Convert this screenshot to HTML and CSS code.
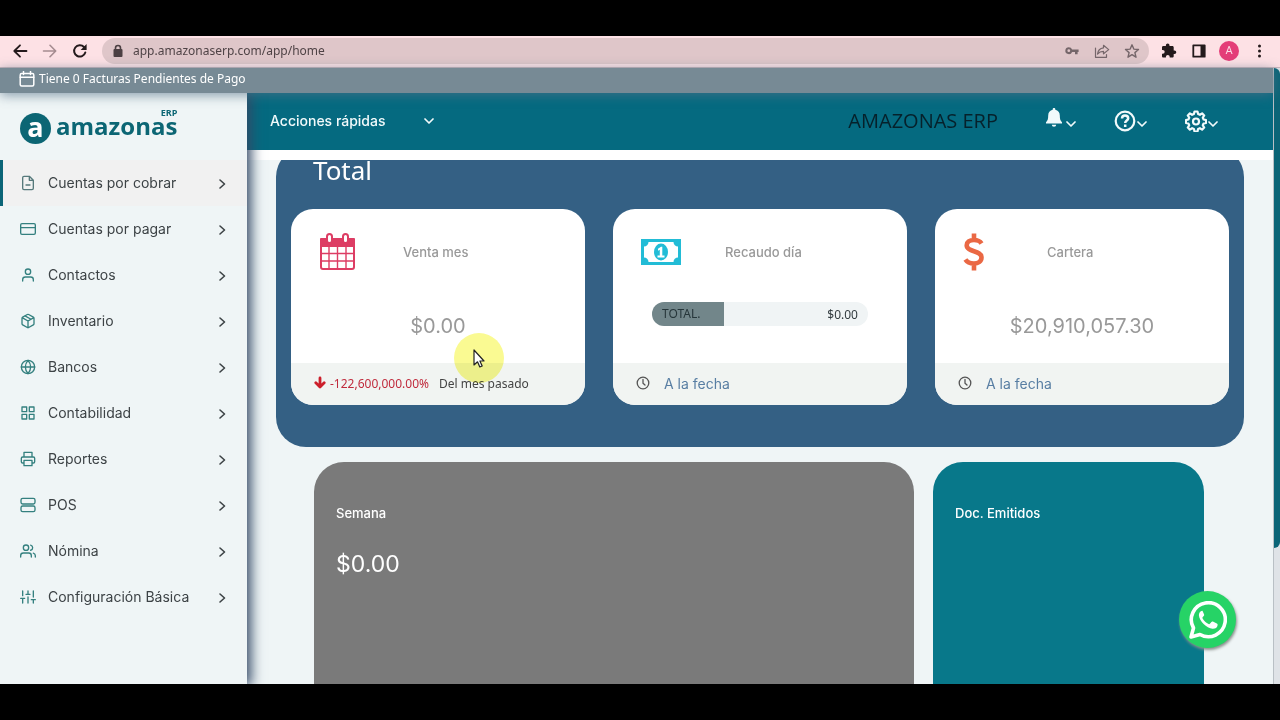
FILE: index.html
```html
<!DOCTYPE html>
<html lang="es">
<head>
<meta charset="utf-8">
<meta name="viewport" content="width=device-width, initial-scale=1">
<title>Amazonas ERP</title>
<link rel="stylesheet" href="styles.css">
</head>
<body>
<div class="screen">
  <div class="browser">
    <div class="tools">
      <button aria-label="Atrás"><svg class="s16" viewBox="0 0 16 16" stroke-width="1.800"><path d="M14.500 8H2.500M8 2.300L2.300 8L8 13.700"/></svg></button>
      <button class="faded" aria-label="Adelante"><svg class="s16" viewBox="0 0 16 16" stroke-width="1.600"><path d="M1.500 8h12M8 2.300L13.700 8L8 13.700"/></svg></button>
      <button aria-label="Recargar"><svg class="s16" viewBox="0 0 16 16" stroke-width="2"><path d="M13.300 9.500A5.700 5.700 0 1 1 12 4"/><path d="M14.600 1v6h-6z" fill="currentColor" stroke="none"/></svg></button>
    </div>
    <div class="address">
      <svg class="lock" viewBox="0 0 10 14" stroke-width="1.600"><rect x="0.500" y="5" width="9" height="8" rx="1" fill="currentColor" stroke="none"/><path d="M2.500 6V4a2.500 2.500 0 0 1 5 0v2"/></svg>
      <input type="text" aria-label="Dirección" value="app.amazonaserp.com/app/home">
      <div class="tools soft">
        <button aria-label="Contraseñas"><svg class="s16 solid" viewBox="0 0 16 16"><path fill-rule="evenodd" d="M4.800 4.200a3.500 3.500 0 1 0 3.300 4.700H11v2.300h2.600V8.900h1V6.500H8.100A3.500 3.500 0 0 0 4.800 4.200zM4.800 6.300a1.400 1.400 0 1 1 0 2.800a1.400 1.400 0 0 1 0-2.800z"/></svg></button>
        <button aria-label="Compartir"><svg class="s16" viewBox="0 0 16 16" stroke-width="1.200"><path d="M1.500 5v9.300h11V11.500M9.500 2.300l5.200 4.300l-5.200 4.200V8.400c-2.800 0-4.500.8-6 2.600c.4-3.500 2.500-5.800 6-6.200z"/></svg></button>
        <button aria-label="Favorito"><svg class="s16" viewBox="0 0 16 16" stroke-width="1.400"><path d="M8 1.800l1.800 4.300l4.700.4l-3.600 3.100l1.100 4.600L8 11.700l-4 2.500l1.100-4.600L1.500 6.500l4.700-.4z"/></svg></button>
      </div>
    </div>
    <div class="tools">
      <button aria-label="Extensiones"><svg class="s16 solid" viewBox="0 0 16 16"><path d="M13.500 7.500h-.8V4.300c0-.7-.6-1.300-1.300-1.300H8.500v-.8a1.800 1.800 0 0 0-3.600 0V3H2.300C1.600 3 1 3.600 1 4.300v2.600h.8a1.900 1.900 0 0 1 0 3.800H1v2.600c0 .7.600 1.300 1.300 1.300h2.600v-.8a1.900 1.900 0 0 1 3.800 0v.8h2.700c.7 0 1.300-.6 1.300-1.300v-2.200h.8a1.800 1.800 0 0 0 0-3.600z"/></svg></button>
      <button aria-label="Panel lateral"><svg class="s16" viewBox="0 0 16 16" stroke-width="1.800"><path d="M2.300 2.300h11.400v11.400H2.300z"/><path d="M9.500 2v12H14V2z" fill="currentColor" stroke="none"/></svg></button>
      <button aria-label="Perfil"><span class="avatar">A</span></button>
      <button aria-label="Más"><svg class="s16 solid" viewBox="0 0 16 16"><circle cx="8.500" cy="3" r="1.500"/><circle cx="8.500" cy="8" r="1.500"/><circle cx="8.500" cy="13" r="1.500"/></svg></button>
    </div>
  </div>

  <div class="page">
    <div class="app">
      <div class="notice">
        <svg class="s16" viewBox="0 0 16 16" stroke-width="1.500"><rect x="1.200" y="2.500" width="13.600" height="12.500" rx="1.500"/><path d="M4.500 0.500v3M11.500 0.500v3M1.200 6.200h13.600"/></svg>
        <span>Tiene 0 Facturas Pendientes de Pago</span>
      </div>
      <div class="frame">
        <aside class="sidebar">
          <a class="brand" href="#" aria-label="Amazonas ERP">
            <span class="brand-mark">a</span>
            <span class="brand-name"><small>ERP</small><span>amazonas</span></span>
          </a>
          <nav class="menu">
            <a class="active" href="#"><svg class="s16" viewBox="0 0 24 24"><path d="M14 2H6a2 2 0 0 0-2 2v16a2 2 0 0 0 2 2h12a2 2 0 0 0 2-2V8zM14 2v6h6M9 15h6"/></svg><span>Cuentas por cobrar</span><svg class="arrow" viewBox="0 0 14 14"><path d="M5 3l4.500 4L5 11"/></svg></a>
            <a href="#"><svg class="s16" viewBox="0 0 24 24"><rect x="1" y="4" width="22" height="16" rx="2"/><path d="M1 10h22"/></svg><span>Cuentas por pagar</span><svg class="arrow" viewBox="0 0 14 14"><path d="M5 3l4.500 4L5 11"/></svg></a>
            <a href="#"><svg class="s16" viewBox="0 0 24 24"><path d="M20 21v-2a4 4 0 0 0-4-4H8a4 4 0 0 0-4 4v2"/><circle cx="12" cy="7" r="4"/></svg><span>Contactos</span><svg class="arrow" viewBox="0 0 14 14"><path d="M5 3l4.500 4L5 11"/></svg></a>
            <a href="#"><svg class="s16" viewBox="0 0 24 24"><path d="M16.500 9.400l-9-5.190M21 16V8a2 2 0 0 0-1-1.730l-7-4a2 2 0 0 0-2 0l-7 4A2 2 0 0 0 3 8v8a2 2 0 0 0 1 1.730l7 4a2 2 0 0 0 2 0l7-4A2 2 0 0 0 21 16zM3.270 6.960L12 12.010l8.730-5.050M12 22.080V12"/></svg><span>Inventario</span><svg class="arrow" viewBox="0 0 14 14"><path d="M5 3l4.500 4L5 11"/></svg></a>
            <a href="#"><svg class="s16" viewBox="0 0 24 24"><circle cx="12" cy="12" r="10"/><path d="M2 12h20M12 2a15.300 15.300 0 0 1 4 10a15.300 15.300 0 0 1-4 10a15.300 15.300 0 0 1-4-10a15.300 15.300 0 0 1 4-10z"/></svg><span>Bancos</span><svg class="arrow" viewBox="0 0 14 14"><path d="M5 3l4.500 4L5 11"/></svg></a>
            <a href="#"><svg class="s16" viewBox="0 0 24 24"><path d="M3 3h7v7H3zM14 3h7v7h-7zM14 14h7v7h-7zM3 14h7v7H3z"/></svg><span>Contabilidad</span><svg class="arrow" viewBox="0 0 14 14"><path d="M5 3l4.500 4L5 11"/></svg></a>
            <a href="#"><svg class="s16" viewBox="0 0 24 24"><path d="M6 9V2h12v7M6 18H4a2 2 0 0 1-2-2v-5a2 2 0 0 1 2-2h16a2 2 0 0 1 2 2v5a2 2 0 0 1-2 2h-2M6 14h12v8H6z"/></svg><span>Reportes</span><svg class="arrow" viewBox="0 0 14 14"><path d="M5 3l4.500 4L5 11"/></svg></a>
            <a href="#"><svg class="s16" viewBox="0 0 24 24"><rect x="1.500" y="2" width="21" height="8.500" rx="2.500"/><rect x="1.500" y="13.500" width="21" height="8.500" rx="2.500"/></svg><span>POS</span><svg class="arrow" viewBox="0 0 14 14"><path d="M5 3l4.500 4L5 11"/></svg></a>
            <a href="#"><svg class="s16" viewBox="0 0 24 24"><path d="M17 21v-2a4 4 0 0 0-4-4H5a4 4 0 0 0-4 4v2M23 21v-2a4 4 0 0 0-3-3.870M16 3.130a4 4 0 0 1 0 7.750"/><circle cx="9" cy="7" r="4"/></svg><span>Nómina</span><svg class="arrow" viewBox="0 0 14 14"><path d="M5 3l4.500 4L5 11"/></svg></a>
            <a href="#"><svg class="s16" viewBox="0 0 24 24"><path d="M4 21v-7M4 10V3M12 21v-9M12 8V3M20 21v-5M20 12V3M1 14h6M9 8h6M17 16h6"/></svg><span>Configuración Básica</span><svg class="arrow" viewBox="0 0 14 14"><path d="M5 3l4.500 4L5 11"/></svg></a>
          </nav>
        </aside>

        <main class="main">
          <header class="topbar">
            <div class="quick">
              <select aria-label="Acciones rápidas"><option>Acciones rápidas</option></select>
              <svg class="chev" viewBox="0 0 10 10"><path d="M1 3l4 4l4-4"/></svg>
            </div>
            <span class="company">AMAZONAS ERP</span>
            <div class="actions">
              <button aria-label="Notificaciones"><svg class="s22 solid bell" viewBox="0 0 22 22"><path d="M11 0c-.8 0-1.300.5-1.300 1.300v.5C6.900 2.300 5.200 4.500 5.200 7.500c0 3.500-.6 5.300-2.200 6.700v1.300h16v-1.300c-1.600-1.400-2.200-3.200-2.200-6.700c0-3-1.700-5.200-4.500-5.700v-.5C12.300.5 11.800 0 11 0zM8.800 16.700a2.200 2 0 0 0 4.400 0z"/></svg><svg class="chev" viewBox="0 0 10 10"><path d="M1 3l4 4l4-4"/></svg></button>
              <button aria-label="Ayuda"><svg class="s22" viewBox="0 0 22 22" stroke-width="2.200"><circle cx="11" cy="11" r="9.300"/><path d="M8 8.500c0-1.900 1.300-3 3-3s3.200 1.100 3.200 2.800c0 2.200-3 2.200-3 4.700M11.200 14.500v2.400" stroke-linecap="butt" stroke-width="2.500"/></svg><svg class="chev" viewBox="0 0 10 10"><path d="M1 3l4 4l4-4"/></svg></button>
              <button aria-label="Ajustes"><svg class="s22" viewBox="0 0 22 22" stroke-width="2.200"><path d="M9.500 1.500h3l.6 2.500l1.800.8l2.200-1.400l2.100 2.100l-1.400 2.200l.8 1.800l2.500.6v2.800l-2.500.6l-.8 1.800l1.400 2.200l-2.100 2.100l-2.200-1.400l-1.800.8l-.6 2.500h-3l-.6-2.500l-1.800-.8l-2.200 1.400l-2.100-2.100l1.400-2.200l-.8-1.800l-2.500-.6v-2.800l2.500-.6l.8-1.800l-1.400-2.200l2.100-2.100l2.200 1.400l1.800-.8z"/><circle cx="11" cy="11.500" r="3"/></svg><svg class="chev" viewBox="0 0 10 10"><path d="M1 3l4 4l4-4"/></svg></button>
            </div>
          </header>

          <div class="content">
            <section class="summary">
              <h1>Total</h1>
              <div class="cards">
                <article class="card">
                  <div class="card-head">
                    <svg class="s40" viewBox="0 0 40 40" stroke-width="2"><rect x="2" y="7" width="33" height="30" rx="2"/><path d="M2 7h33v7H2z" fill="currentColor"/><path d="M2 21.500h33M2 29h33M10 14v23M18.500 14v23M27 14v23" stroke-width="1.400"/><rect x="8" y="2" width="5" height="9" rx="2.500" fill="#fff"/><rect x="24" y="2" width="5" height="9" rx="2.500" fill="#fff"/></svg>
                    <h2>Venta mes</h2>
                  </div>
                  <p class="amount">$0.00</p>
                  <footer class="card-foot trend">
                    <svg class="down" viewBox="0 0 12 14" stroke-width="2.800"><path d="M6 2v9M1.800 6.800L6 11l4.200-4.200"/></svg>
                    <span class="loss">-122,600,000.00%</span>
                    <span>Del mes pasado</span>
                  </footer>
                  <div class="pointer"><svg viewBox="0 0 12 19"><path d="M1 1v15l3.500-3.200l2.300 5.200l2.400-1l-2.300-5H11z" fill="#fff" stroke="#222" stroke-width="1.200"/></svg></div>
                </article>

                <article class="card cash">
                  <div class="card-head">
                    <svg class="s40" viewBox="0 0 40 40"><g stroke="none"><path d="M0 7h40v26H0z" fill="currentColor"/><path d="M7.500 10h25a4.500 4.500 0 0 0 4.500 4.500v11a4.500 4.500 0 0 0-4.500 4.500h-25A4.500 4.500 0 0 0 3 25.500v-11A4.500 4.500 0 0 0 7.500 10z" fill="#fff"/><ellipse cx="20" cy="20" rx="7" ry="8.500" fill="currentColor"/><path d="M17 16.800l3-2h1.300v8.700h2.200v2h-7v-2h2.300v-5.700l-1.800 1z" fill="#fff"/></g></svg>
                    <h2>Recaudo día</h2>
                  </div>
                  <div class="bar"><span class="bar-fill">TOTAL.</span><span>$0.00</span></div>
                  <footer class="card-foot">
                    <svg class="clock" viewBox="0 0 14 14" stroke-width="1.300"><circle cx="7" cy="7" r="5.800"/><path d="M7 3.500V7.200l2 1.800"/></svg>
                    <a href="#">A la fecha</a>
                  </footer>
                </article>

                <article class="card due">
                  <div class="card-head">
                    <svg class="s40" viewBox="0 0 40 40" stroke-width="4.600"><path d="M18.500 11.500C17 9 14.500 8 11 8c-4.500 0-7.300 2-7.300 5.200c0 7.200 14.800 4.800 14.800 12.300c0 4-3.200 6-7.600 6c-3.900 0-6.800-1.300-8.500-4M11 1.500v5.500M11 32v6.500" stroke-linecap="butt"/></svg>
                    <h2>Cartera</h2>
                  </div>
                  <p class="amount">$20,910,057.30</p>
                  <footer class="card-foot">
                    <svg class="clock" viewBox="0 0 14 14" stroke-width="1.300"><circle cx="7" cy="7" r="5.800"/><path d="M7 3.500V7.200l2 1.800"/></svg>
                    <a href="#">A la fecha</a>
                  </footer>
                </article>
              </div>
            </section>

            <div class="lower">
              <section class="tile week"><h2>Semana</h2><p>$0.00</p></section>
              <section class="tile docs"><h2>Doc. Emitidos</h2></section>
            </div>
          </div>
        </main>
      </div>
    </div>
    <div class="scroll"><div class="thumb"></div></div>
    <a class="whatsapp" href="#" aria-label="WhatsApp"><svg viewBox="0 0 38 38"><path d="M2 36l2.500-9A17 17 0 1 1 11 33.500z" stroke-width="3.600"/><path d="M13.200 9.800c-2 .3-3.400 2.300-3.300 4.500c.4 5.700 7.700 13 13.600 13.500c2.600.2 4.800-1.200 5.100-3.600c.1-1-.2-1.400-.8-1.700l-3.900-1.900c-.7-.3-1-.2-1.500.4l-1.500 1.800c-.4.400-.7.500-1.300.2c-2.500-1.200-4.600-3-6-5.600c-.3-.5-.2-.9.200-1.300l1.100-1.300c.3-.5.4-.8.200-1.400l-1.500-3.300c-.3-.5-.5-.4-1.400-.3z" fill="currentColor" stroke="none"/></svg></a>
  </div>
</div>
</body>
</html>
```

FILE: styles.css
```css
* { box-sizing: border-box; }

body {
  margin: 0;
  background: #000;
  font-family: Inter, "Liberation Sans", sans-serif;
  font-size: 14px;
}

h1, h2, p { margin: 0; font-weight: 400; }
a { color: inherit; text-decoration: none; }
button { border: 0; padding: 0; background: none; color: inherit; font: inherit; }
svg { display: block; flex: none; fill: none; stroke: currentColor; stroke-linecap: round; stroke-linejoin: round; }

.solid { fill: currentColor; stroke: none; }
.s16 { width: 16px; height: 16px; }
.s22 { width: 22px; height: 22px; }
.s40 { width: 40px; height: 40px; }

.screen { display: flex; flex-direction: column; height: 100vh; padding: 36px 0; }

/* Browser bar */
.browser {
  display: flex;
  align-items: center;
  flex: none;
  height: 32px;
  padding: 0 6px 2px 5px;
  background: #fde1e5;
  border-bottom: 1px solid #c9b5bb;
  color: #241a1c;
}
.tools { display: flex; }
.tools button { display: grid; place-items: center; width: 30px; height: 26px; }
.tools .faded { color: #a58c90; }
.soft { color: #75666a; }
.address {
  display: flex;
  align-items: center;
  flex: 1;
  height: 26px;
  margin: 0 5px 0 7px;
  padding: 0 2px 0 11px;
  border-radius: 13px;
  background: #dfc6c9;
}
.lock { width: 10px; height: 14px; color: #4c4043; }
.address input {
  flex: 1;
  min-width: 0;
  margin-left: 10px;
  padding: 0;
  border: 0;
  background: none;
  color: #4f4346;
  font-family: "Noto Sans", sans-serif;
  font-size: 12px;
}
.avatar {
  display: grid;
  place-items: center;
  width: 20px;
  height: 20px;
  border-radius: 50%;
  background: #e43d78;
  color: #fbdce6;
  font-family: Roboto, sans-serif;
  font-size: 11px;
}

/* Page shell */
.page { position: relative; display: flex; flex: 1; min-height: 0; }
.app { display: flex; flex: 1; flex-direction: column; min-width: 0; background: #eff5f6; }
.notice {
  display: flex;
  align-items: center;
  gap: 4px;
  flex: none;
  position: relative;
  z-index: 3;
  height: 25px;
  padding: 0 19px 4px;
  background: #778a95;
  box-shadow: 0 2px 12px rgba(84, 112, 135, 0.7);
  color: #fff;
  font-family: "Noto Sans", sans-serif;
  font-size: 12px;
}
.frame { display: flex; flex: 1; min-height: 0; overflow: hidden; }

.scroll { width: 7px; background: #dfe3e7; border-left: 1px solid #b9c0c5; }
.thumb { height: 78%; border-radius: 0 6px 6px 0; background: #0b6577; }

/* Sidebar */
.sidebar {
  flex: none;
  position: relative;
  z-index: 2;
  width: 247px;
  background: #eff5f6;
  box-shadow: 2px 0 12px 2px #334966;
}
.brand { display: flex; align-items: center; gap: 5px; height: 67px; padding: 3px 20px 0; color: #0c6674; font-family: "Open Sans", sans-serif; font-weight: 700; }
.brand-mark { display: grid; place-items: center; width: 31px; height: 31px; padding-bottom: 3px; border-radius: 50%; background: #0c6674; color: #fff; font-size: 27px; line-height: 28px; }
.brand-name { display: flex; flex-direction: column; padding-bottom: 10px; font-size: 24px; line-height: 20px; }
.brand-name small { align-self: flex-end; font-size: 9px; line-height: 6px; }

.menu a { display: flex; align-items: center; height: 46px; padding: 0 18px 0 17px; border-left: 3px solid transparent; color: #3d4346; }
.menu a span { flex: 1; margin-left: 12px; padding-bottom: 2px; }
.menu .s16 { color: #34807f; stroke-width: 2; }
.menu .active { border-left-color: #0b6577; background: #f1f1f1; }
.menu .active .s16 { color: #56797b; }
.menu .arrow { width: 14px; height: 14px; margin-top: 2px; stroke-width: 1.6; }

/* Top bar */
.main { display: flex; flex: 1; flex-direction: column; min-width: 0; }
.topbar {
  display: flex;
  align-items: center;
  flex: none;
  height: 57px;
  padding: 0 17px 2px 23px;
  background: #056a80;
  color: #f2fafb;
}
.quick { display: grid; grid-template-columns: 1fr 10px; align-items: center; width: 164px; }
.quick select {
  grid-area: 1 / 1 / 2 / 3;
  appearance: none;
  width: 100%;
  margin: 0;
  padding: 0;
  border: 0;
  background: none;
  color: inherit;
  font: inherit;
  font-weight: 500;
}
.quick .chev { grid-area: 1 / 2; }
.chev { width: 10px; height: 10px; stroke-width: 1.7; }
.company { margin: 0 45px 0 auto; color: #06212b; font-family: "Open Sans", sans-serif; font-size: 20px; }
.actions { display: grid; grid-template-columns: repeat(3, 71px); }
.actions button { display: flex; align-items: center; gap: 1px; height: 32px; }
.actions .chev { margin-top: 6px; }
.actions .bell { margin-bottom: 4px; }

/* Content */
.content { flex: 1; min-height: 0; overflow: hidden; border-top: 10px solid #fff; }
.summary { margin: -13px 29px 0; padding: 0 15px 42px; border-radius: 30px; background: #346084; }
.summary h1 { height: 62px; padding: 4px 22px 0; color: #fff; font-family: "Noto Sans", sans-serif; font-size: 26px; line-height: 38px; }
.cards { display: grid; grid-template-columns: repeat(3, 1fr); gap: 28px; }
.card { display: flex; position: relative; flex-direction: column; height: 196px; border-radius: 22px; background: #fff; color: #dd3d64; }
.cash { color: #22bcd6; }
.due { color: #ea6844; }
.card-head { display: grid; grid-template-columns: 84px 1fr; align-items: center; height: 86px; padding-left: 28px; }
.card-head h2 { color: #999; font-size: 13px; font-weight: 500; }
.amount { flex: 1; padding-top: 19px; color: #999; text-align: center; font-size: 20px; line-height: 24px; }
.bar {
  display: flex;
  align-items: center;
  justify-content: space-between;
  height: 24px;
  margin: 7px 39px auto;
  padding-right: 10px;
  overflow: hidden;
  border-radius: 12px;
  background: #f0f4f5;
  color: #333c40;
  font-family: "Noto Sans", sans-serif;
  font-size: 12px;
}
.bar-fill { width: 72px; padding-left: 10px; background: #72868a; color: #26363a; line-height: 24px; }
.card-foot { display: flex; align-items: center; height: 42px; padding: 0 23px 2px; border-radius: 0 0 22px 22px; background: #f1f4f2; color: #587ea3; }
.trend { color: #444; font-family: "Noto Sans", sans-serif; font-size: 12px; }
.down { width: 12px; height: 14px; color: #cc1f2b; }
.loss { margin: 0 10px 0 4px; color: #c02b3d; }
.clock { width: 14px; height: 14px; margin-right: 14px; color: #555; }
.pointer { display: grid; place-items: center; position: absolute; top: 124px; left: 163px; width: 50px; height: 50px; border-radius: 50%; background: #fafa92; mix-blend-mode: multiply; }
.pointer svg { width: 12px; height: 19px; }

.lower { display: grid; grid-template-columns: 600fr 271fr; gap: 19px; margin: 15px 69px 0 67px; }
.tile { min-height: 300px; padding: 42px 22px; border-radius: 30px; color: #fff; }
.tile h2 { font-size: 13px; font-weight: 500; line-height: 18px; }
.tile p { margin-top: 26px; font-size: 23px; line-height: 32px; }
.week { background: #7a7a7a; }
.docs { background: #08788a; }

.whatsapp { display: grid; place-items: center; position: absolute; right: 44px; bottom: 36px; z-index: 4; width: 57px; height: 57px; border-radius: 50%; background: #26d366; box-shadow: 1px 2px 3px #8a8f8c; color: #fff; }
.whatsapp svg { width: 38px; height: 38px; }
```
